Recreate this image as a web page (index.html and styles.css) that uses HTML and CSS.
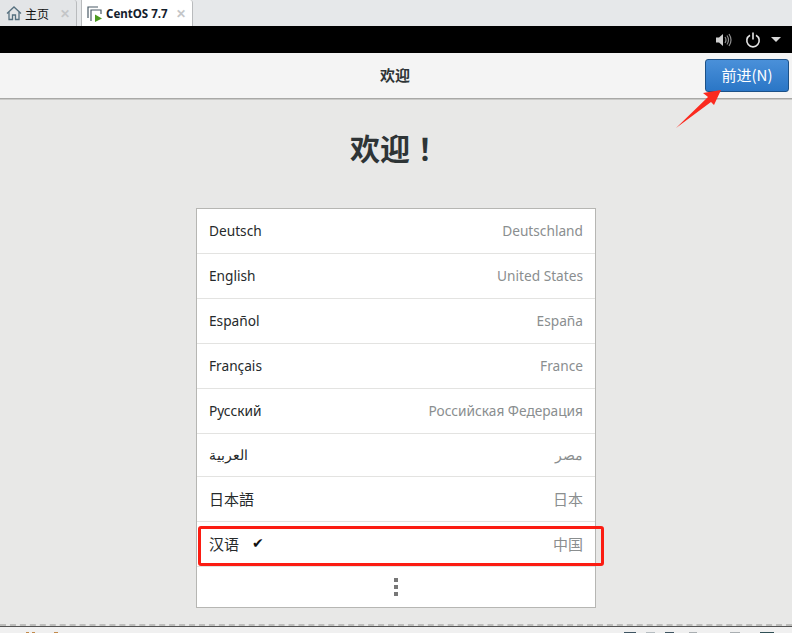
FILE: index.html
```html
<!DOCTYPE html>
<html lang="zh">
<head>
<meta charset="utf-8">
<title>CentOS 7.7</title>
<link rel="stylesheet" href="styles.css">
</head>
<body>
<div class="tabs">
  <div class="tab">
    <svg class="tab-icon" viewBox="0 0 16 16" width="16" height="16"><path d="M1 8.500 8 2l7 6.500M3 7v7.500h3.500V10h3v4.500H13V7" fill="none" stroke="#56707f" stroke-width="1.300"/></svg>
    <span class="tab-label">主页</span>
    <span class="tab-close">✕</span>
  </div>
  <div class="tab active">
    <svg class="tab-icon" viewBox="0 0 16 16" width="16" height="16"><path d="M1 12V1h10M4 15V4h10v4" fill="none" stroke="#4a5a66" stroke-width="1.200"/><path d="M8 8.500 15 12.500 8 16z" fill="#4c9a1f"/></svg>
    <span class="tab-label strong">CentOS 7.7</span>
    <span class="tab-close">✕</span>
  </div>
</div>
<div class="topbar">
  <svg viewBox="0 0 16 14" width="16" height="14"><path d="M0 4.500h3L7 1v12L3 9.500H0z" fill="#cfcfcf"/><path d="M9 4q2 3 0 6M11 2.500q3 4.500 0 9M13 1q4 6 0 12" fill="none" stroke="#8f8f8f" stroke-width="1.200"/></svg>
  <svg class="power" viewBox="0 0 16 16" width="16" height="16"><path d="M5 3.200a6.200 6.200 0 1 0 6 0M8 .5v7" fill="none" stroke="#e6e6e6" stroke-width="1.600"/></svg>
  <span class="caret"></span>
</div>
<header class="header">
  <span class="header-title">欢迎</span>
  <button class="next">前进(N)</button>
</header>
<main class="main">
  <h1 class="welcome">欢迎<span class="bang" lang="zh-TW">！</span></h1>
  <div class="list">
    <div class="row"><span class="name">Deutsch</span><span class="region">Deutschland</span></div>
    <div class="row"><span class="name">English</span><span class="region">United States</span></div>
    <div class="row"><span class="name">Español</span><span class="region">España</span></div>
    <div class="row"><span class="name">Français</span><span class="region">France</span></div>
    <div class="row"><span class="name">Русский</span><span class="region">Российская Федерация</span></div>
    <div class="row short"><span class="name">العربية</span><span class="region">مصر</span></div>
    <div class="row cjk"><span class="name">日本語</span><span class="region">日本</span></div>
    <div class="row cjk"><span class="name">汉语</span><span class="check">✔</span><span class="region">中国</span></div>
    <div class="more"><span class="dot"></span><span class="dot"></span><span class="dot"></span></div>
  </div>
</main>
<div class="status">
  <span class="st g"></span><span class="st h"></span><span class="st i"></span>
  <span class="st a"></span><span class="st b"></span><span class="st c"></span><span class="st d"></span><span class="st e"></span><span class="st f"></span>
</div>
<div class="mark-box"></div>
<svg class="arrow" viewBox="0 0 50 42" width="50" height="42"><path d="M1 40 33 9 28 5 46 2 39 17 36 14z" fill="#fb2a1f"/></svg>
</body>
</html>
```
FILE: styles.css
```css
* { box-sizing: border-box; }
html, body { margin: 0; height: 633px; overflow: hidden; }
body {
  width: 792px;
  position: relative;
  display: flex;
  flex-direction: column;
  background: #e8e8e7;
  font-family: "Noto Sans", "Noto Sans CJK SC", sans-serif;
  color: #2e3436;
}
.tabs {
  height: 26px;
  flex: none;
  display: flex;
  align-items: flex-end;
  gap: 4px;
  background: #e6e8ea;
}
.tab {
  height: 26px;
  padding: 0 6px;
  display: flex;
  align-items: center;
  background: #e3e5e7;
  border-right: 1px solid #b9bbbd;
  width: 77px;
  border-radius: 0 3px 0 0;
}
.tab.active {
  background: #fff;
  width: 112px;
  padding-left: 5px;
  padding-top: 1px;
  border-left: 1px solid #b9bbbd;
}
.tab-icon { flex: none; }
.tab-label {
  margin-left: 3px;
  font-size: 12px;
  font-family: "Noto Sans CJK SC", sans-serif;
  color: #111;
  white-space: nowrap;
}
.tab-label.strong { font: bold 11.500px "Noto Sans", sans-serif; margin-left: 3px; color: #14202c; }
.tab-close { margin-left: auto; font-size: 12px; font-weight: bold; color: #c4c6c8; }
.topbar {
  height: 27px;
  flex: none;
  background: #000;
  display: flex;
  align-items: center;
  justify-content: flex-end;
  padding: 0 11px 0 0;
}
.power { margin-left: 13px; }
.caret {
  margin-left: 10px;
  border: 5px solid transparent;
  border-top: 5px solid #d8d8d8;
  border-bottom: 0;
}
.header {
  height: 46px;
  flex: none;
  display: flex;
  align-items: center;
  justify-content: center;
  position: relative;
  padding: 0 2px 2px 0;
  background: #f4f4f4;
  border-bottom: 1px solid #a8a8a6;
  box-shadow: 0 1px 0 #c9c9c7;
}
.header-title {
  font: bold 15px "Noto Sans CJK SC", sans-serif;
  color: #2e3436;
}
.next {
  position: absolute;
  right: 3px;
  top: 6px;
  width: 84px;
  height: 33px;
  padding: 0 0 2px;
  border: 1px solid #1c5187;
  border-radius: 3px;
  background: linear-gradient(#4a90d9, #2a76c6);
  color: #fff;
  font: 15px "Noto Sans CJK SC", sans-serif;
}
.main {
  flex: 1;
  min-height: 0;
  display: flex;
  flex-direction: column;
  align-items: center;
  border-bottom: 2px dashed #bdbdbb;
}
.welcome {
  margin: 26px 0 0;
  height: 83px;
  padding-right: 2px;
  font: bold 30px/44px "Noto Sans CJK SC", sans-serif;
  color: #2e3436;
}
.bang { font-family: "Noto Sans CJK TC", sans-serif; }
.list {
  width: 400px;
  height: 400px;
  flex: none;
  background: #fff;
  border: 1px solid #b6b6b3;
  display: flex;
  flex-direction: column;
}
.row {
  height: 45px;
  flex: none;
  display: flex;
  align-items: center;
  padding: 0 12px 2px;
  border-bottom: 1px solid #e3e3e1;
  font-size: 13.700px;
}
.row.short { height: 43px; }
.row.cjk { font-size: 15px; }
.name { color: #262a2b; }
.region { margin-left: auto; color: #8a8e8f; }
.check { margin-left: 13px; font: 14px "DejaVu Sans", sans-serif; color: #111; }
.more {
  flex: 1;
  display: flex;
  flex-direction: column;
  align-items: center;
  justify-content: center;
  gap: 3px;
}
.dot { width: 4px; height: 4px; background: #777; }
.status {
  height: 7px;
  flex: none;
  position: relative;
  background: #f0f0f0;
  border-top: 1px solid #555;
}
.st { position: absolute; top: 5px; height: 1px; }
.st.g { left: 26px; width: 3px; background: #c28a4b; }
.st.h { left: 32px; width: 3px; background: #c28a4b; }
.st.i { left: 54px; width: 4px; background: #c28a4b; }
.st.a { left: 624px; width: 12px; background: #3f5562; }
.st.b { left: 646px; width: 9px; background: #b5bcc0; }
.st.c { left: 665px; width: 9px; background: #3f5562; }
.st.d { left: 689px; width: 8px; background: #a9aeb1; }
.st.e { left: 730px; width: 10px; background: #a9aeb1; }
.st.f { left: 760px; width: 14px; background: #2f4f55; }
.mark-box {
  position: absolute;
  left: 198px;
  top: 526px;
  width: 406px;
  height: 40px;
  border: 3px solid #fb1c12;
  border-radius: 3px;
}
.arrow {
  position: absolute;
  left: 675px;
  top: 88px;
}
```
